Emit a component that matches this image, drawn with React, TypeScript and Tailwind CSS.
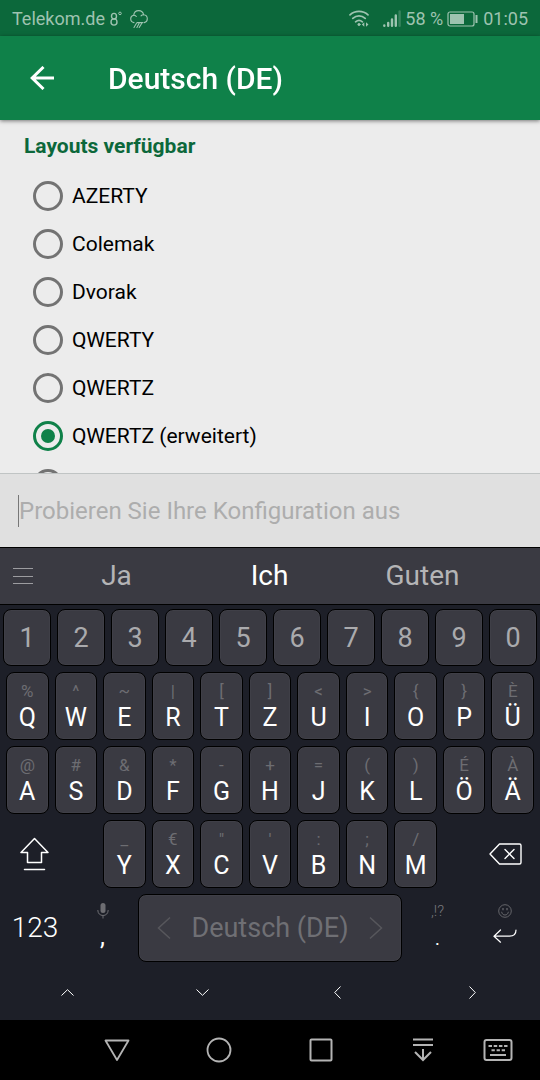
import type { ReactNode } from "react";

type LetterKey = { main: string; hint: string };

const layouts = ["AZERTY", "Colemak", "Dvorak", "QWERTY", "QWERTZ", "QWERTZ (erweitert)"];
const digits = ["1", "2", "3", "4", "5", "6", "7", "8", "9", "0"];

const keys = (main: string, hints: string): LetterKey[] =>
  Array.from(main).map((m, i) => ({ main: m, hint: Array.from(hints)[i] }));

const topRow = keys("QWERTZUIOPÜ", "%^~|[]<>{}È");
const homeRow = keys("ASDFGHJKLÖÄ", "@#&*-+=()ÉÀ");
const bottomRow = keys("YXCVBNM", "_€\"':;/");

const keyCap =
  "rounded-lg border border-black bg-[#3a3a42] shadow-[inset_0_0_0_1px_#3f3f47]";

const radioStyle =
  "size-[30px] shrink-0 appearance-none rounded-full border-3 border-[#737373] checked:border-[#0f8149] checked:bg-[#0f8149] checked:bg-clip-content checked:p-[5px]";

function Letter({ main, hint }: LetterKey) {
  return (
    <button type="button" className={`flex h-[68px] min-w-0 flex-col items-center pt-2 ${keyCap}`}>
      <span className="text-[17px] leading-5 text-[#6d6d72]">{hint}</span>
      <span className="text-[25px] leading-[34px] text-white">{main}</span>
    </button>
  );
}

function IconButton({ label, className, children }: { label: string; className?: string; children: ReactNode }) {
  return (
    <button type="button" aria-label={label} className={`flex items-center ${className ?? "justify-center"}`}>
      {children}
    </button>
  );
}

function StatusBar() {
  return (
    <div className="flex h-9 shrink-0 items-center bg-[#0c683b] px-3 pt-0.5 text-[18px] leading-6 text-[#9ec3b0]">
      <span>Telekom.de</span>
      <svg className="ml-[5px] h-5 w-3" viewBox="0 0 12 20" fill="none" stroke="currentColor" strokeWidth="1.4" aria-label="8°">
        <ellipse cx="4" cy="7.2" rx="2.5" ry="2.8" />
        <ellipse cx="4" cy="13" rx="3" ry="3.1" />
        <circle cx="10" cy="4.4" r="1.3" strokeWidth="1" />
      </svg>
      <svg className="ml-2 h-5 w-[18px]" viewBox="0 0 18 20" fill="none" stroke="currentColor" strokeWidth="1.1" strokeLinecap="round">
        <path d="M4 13.600C2 13.300.7 11.800.7 9.800c0-1.900 1.300-3.300 3-3.500C4 3.500 6 1.600 8.700 1.600c2.500 0 4.400 1.600 4.900 4.100 2.200.2 3.700 1.900 3.700 4.100 0 2.100-1.300 3.500-3 3.800" />
        <path d="M3.700 6.300c1.100 0 2 .4 2.600 1.200M13.600 5.700c-1.100 0-2 .4-2.600 1.100" />
        <path d="M6.500 14.300 4 18.500M9.200 14.300l-2.300 4.200M11.800 14.300l-2.600 4.200M7 13.600h6" />
      </svg>
      <svg className="ml-auto h-5 w-5" viewBox="0 0 20 20" fill="none" stroke="currentColor" strokeWidth="1.7" strokeLinecap="round">
        <path d="M1 5.800c5-4.600 13-4.600 18 0M3.800 9.400c3.700-3.500 8.700-3.500 12.400 0M6.600 12.800c2-1.800 4.800-1.800 6.800 0" />
        <circle cx="10" cy="15.500" r="1.200" fill="currentColor" strokeWidth="0.6" />
        <path d="M15.300 13.300v4.400l-2.500-2.200zM17 13.300v4.400l2.500-2.200z" fill="currentColor" stroke="none" />
      </svg>
      <svg className="ml-3.5 h-[18px] w-[18px]" viewBox="0 0 18 18" fill="none" stroke="currentColor" strokeWidth="2.400" strokeLinecap="round">
        <path d="M1.300 15.500v.2M5.200 13v2.700M9 9.500v6.200M12.800 5.500v10.200" />
        <path d="M16.600 1.500v14.200" opacity="0.3" />
      </svg>
      <span className="ml-1">58 %</span>
      <svg className="ml-1 h-[18px] w-8" viewBox="0 0 32 18" fill="none" stroke="currentColor">
        <rect x="1" y="2" width="26" height="14" rx="2" strokeWidth="1.200" />
        <rect x="3" y="4" width="14" height="10" fill="currentColor" stroke="none" />
        <path d="M29.500 5v8" strokeWidth="2" />
      </svg>
      <span className="ml-1">01:05</span>
    </div>
  );
}

function LayoutList() {
  return (
    <main className="min-h-0 flex-1 overflow-y-auto bg-[#ececec] [scrollbar-width:none]">
      <fieldset className="min-w-0">
        <legend className="px-6 pt-3 pb-3 text-[21px] leading-7 font-bold text-[#0c683b]">Layouts verfügbar</legend>
        {layouts.map((name) => (
          <label key={name} className="flex h-12 items-center gap-[9px] pl-[33px] text-[21px] leading-6 text-black">
            <input
              type="radio"
              name="layout"
              defaultChecked={name === "QWERTZ (erweitert)"}
              className={radioStyle}
            />
            {name}
          </label>
        ))}
        <div className="flex h-12 items-center pl-[33px]">
          <input type="radio" name="layout" aria-label="Workman" className={radioStyle} />
        </div>
      </fieldset>
    </main>
  );
}

function Keyboard() {
  return (
    <section aria-label="Tastatur" className="shrink-0 bg-[#1d1f28]">
      <div className="grid h-[58px] grid-cols-[40fr_153fr_153fr_153fr_41fr] items-center border-y border-black bg-[#3a3a42] text-[28px] text-[#b4b4b6]">
        <IconButton label="Menü" className="justify-center pl-[5px]">
          <svg className="h-[18px] w-5" viewBox="0 0 20 18" stroke="#9c9ca0" strokeWidth="1">
            <path d="M0 1.500h20M0 9.500h20M0 16.500h20" />
          </svg>
        </IconButton>
        <button type="button">Ja</button>
        <button type="button" className="text-white">Ich</button>
        <button type="button">Guten</button>
      </div>

      <div className="flex flex-col gap-1.5 pt-1">
        <div className="grid grid-cols-10 gap-1.5 px-[3px]">
          {digits.map((d) => (
            <button key={d} type="button" className={`h-[57px] pt-0.5 text-[27px] text-[#aaaaad] ${keyCap}`}>
              {d}
            </button>
          ))}
        </div>
        <div className="grid grid-cols-11 gap-1.5 px-1.5">
          {topRow.map((k) => (
            <Letter key={k.main} {...k} />
          ))}
        </div>
        <div className="grid grid-cols-11 gap-1.5 px-1.5">
          {homeRow.map((k) => (
            <Letter key={k.main} {...k} />
          ))}
        </div>
        <div className="grid grid-cols-11 gap-1.5 px-1.5">
          <IconButton label="Umschalt" className="col-span-2 pl-[14px]">
            <svg className="h-[34px] w-[29px]" viewBox="0 0 29 34" fill="none" stroke="white" strokeWidth="1.500" strokeLinejoin="round" strokeLinecap="round">
              <path d="M14.500 1.500 1 15.500h6.500v10h14v-10H28z" />
              <path d="M4.500 32.500h20" />
            </svg>
          </IconButton>
          {bottomRow.map((k) => (
            <Letter key={k.main} {...k} />
          ))}
          <IconButton label="Löschen" className="col-span-2 justify-end pr-3">
            <svg className="h-[22px] w-[33px]" viewBox="0 0 33 22" fill="none" stroke="white" strokeWidth="1.400" strokeLinejoin="round" strokeLinecap="round">
              <path d="M10.500 1H30.500Q32 1 32 2.500v17Q32 21 30.500 21H10.500L1 11z" />
              <path d="m16 6.500 9 9M25 6.500l-9 9" />
            </svg>
          </IconButton>
        </div>
        <div className="grid h-[68px] grid-cols-[70fr_65fr_270fr_65fr_70fr]">
          <button type="button" className="text-[28px] font-light text-white">123</button>
          <button type="button" aria-label="Komma, Spracheingabe" className="flex flex-col items-center pt-[7px] text-white">
            <svg className="h-5 w-3" viewBox="0 0 12 20" fill="none" stroke="#6d6d72">
              <rect x="3.500" y="2" width="5" height="10" rx="2.500" fill="#6d6d72" stroke="none" />
              <path d="M.8 9c0 3.500 2.200 5.500 5.200 5.500s5.200-2 5.200-5.500M6 14.500v3" />
            </svg>
            <span className="text-[25px] leading-8">,</span>
          </button>
          <div className="grid px-[3px]">
            <button type="button" className={`flex items-center justify-between px-[18px] text-[27px] text-[#6f6f74] ${keyCap}`}>
              <svg className="h-6 w-[14px]" viewBox="0 0 14 24" fill="none" stroke="#57575c" strokeWidth="1.500">
                <path d="M13 1.500 1.500 12 13 22.500" />
              </svg>
              Deutsch (DE)
              <svg className="h-6 w-[14px]" viewBox="0 0 14 24" fill="none" stroke="#57575c" strokeWidth="1.500">
                <path d="M1 1.500 12.500 12 1 22.500" />
              </svg>
            </button>
          </div>
          <button type="button" className="flex flex-col items-center pt-[7px] text-white">
            <span className="text-[15px] leading-5 font-light text-[#77777c]">,!?</span>
            <span className="text-[25px] leading-8 font-light">.</span>
          </button>
          <IconButton label="Eingabe" className="flex-col gap-[11px] pt-2.5">
            <svg className="size-[14px]" viewBox="0 0 14 14" fill="none" stroke="#6d6d72" strokeWidth="0.9">
              <circle cx="7" cy="7" r="6.300" />
              <path d="M3.600 7.800c.4 2.100 1.700 3.200 3.400 3.200s3-1.100 3.400-3.200" />
              <path d="M5 4v2.200M9 4v2.200" strokeWidth="1.200" />
            </svg>
            <svg className="h-[14px] w-6" viewBox="0 0 24 14" fill="none" stroke="white" strokeWidth="1.200" strokeLinecap="round">
              <path d="M7.500 1 1 7.200l6.500 6M1 7.200h15.500c4.500 0 6.500-2 6.500-6.200" />
            </svg>
          </IconButton>
        </div>
      </div>

      <div className="grid h-[58px] grid-cols-4 pt-0.5">
        <IconButton label="Nach oben">
          <svg className="h-[7px] w-[13px]" viewBox="0 0 13 7" fill="none" stroke="white"><path d="M.5 6.500l6-5.800 6 5.800" /></svg>
        </IconButton>
        <IconButton label="Nach unten">
          <svg className="h-[7px] w-[13px]" viewBox="0 0 13 7" fill="none" stroke="white"><path d="M.5.500l6 5.800 6-5.800" /></svg>
        </IconButton>
        <IconButton label="Nach links">
          <svg className="h-[13px] w-[7px]" viewBox="0 0 7 13" fill="none" stroke="white"><path d="M6.500.500.700 6.500l5.800 6" /></svg>
        </IconButton>
        <IconButton label="Nach rechts">
          <svg className="h-[13px] w-[7px]" viewBox="0 0 7 13" fill="none" stroke="white"><path d="M.5.500l5.800 6-5.800 6" /></svg>
        </IconButton>
      </div>
    </section>
  );
}

function NavigationBar() {
  return (
    <nav className="grid h-[60px] shrink-0 grid-cols-[66fr_102fr_102fr_102fr_102fr_48fr_18fr] bg-black text-[#b4b4b4]">
      <IconButton label="Zurück" className="col-start-2 justify-center">
        <svg className="size-[26px]" viewBox="0 0 26 26" fill="none" stroke="currentColor" strokeWidth="1.800" strokeLinejoin="round">
          <path d="M1.500 3.500h23L13 23z" />
        </svg>
      </IconButton>
      <IconButton label="Startbildschirm">
        <svg className="size-[26px]" viewBox="0 0 26 26" fill="none" stroke="currentColor" strokeWidth="1.800">
          <circle cx="13" cy="13" r="11.500" />
        </svg>
      </IconButton>
      <IconButton label="Letzte Apps">
        <svg className="size-[26px]" viewBox="0 0 26 26" fill="none" stroke="currentColor" strokeWidth="2">
          <rect x="2.500" y="2.500" width="21" height="21" rx="1" />
        </svg>
      </IconButton>
      <IconButton label="Benachrichtigungen">
        <svg className="size-[26px]" viewBox="0 0 26 26" fill="none" stroke="currentColor" strokeWidth="2">
          <path d="M3 2.500h20M3 8h20M13 12v11M5 15l8 8 8-8" />
        </svg>
      </IconButton>
      <IconButton label="Tastatur wechseln">
        <svg className="h-[26px] w-[30px]" viewBox="0 0 30 26" fill="none" stroke="currentColor" strokeWidth="2">
          <rect x="1.500" y="3" width="27" height="20" rx="2" />
          <path d="M5.500 9h19" strokeDasharray="3.500 1.700" />
          <path d="M8.500 13.300h13.500" strokeDasharray="3.300 1.800" />
          <path d="M7 18h16" />
        </svg>
      </IconButton>
    </nav>
  );
}

export default function App() {
  return (
    <div className="flex h-screen flex-col font-['Roboto',sans-serif]">
      <StatusBar />
      <header className="z-10 flex h-[84px] shrink-0 items-center gap-[54px] bg-[#0f8149] pl-[30px] text-white shadow-[0_1px_4px_rgba(0,0,0,0.5)]">
        <button type="button" aria-label="Zurück">
          <svg className="size-6" viewBox="0 0 24 24" fill="none" stroke="currentColor" strokeWidth="3">
            <path d="M24 12H2M13.500 1 2.200 12l11.300 11" />
          </svg>
        </button>
        <h1 className="pt-0.5 text-[30px] leading-9 font-medium">Deutsch (DE)</h1>
      </header>
      <LayoutList />
      <div className="flex h-[74px] shrink-0 items-center border-t border-[#c0c4c4] bg-[#e0e0e0] px-[18px]">
        <input
          type="text"
          aria-label="Konfiguration ausprobieren"
          placeholder="Probieren Sie Ihre Konfiguration aus"
          className="h-8 w-full border-l border-[#777777] text-[24px] outline-none placeholder:text-[#adadad]"
        />
      </div>
      <Keyboard />
      <NavigationBar />
    </div>
  );
}
